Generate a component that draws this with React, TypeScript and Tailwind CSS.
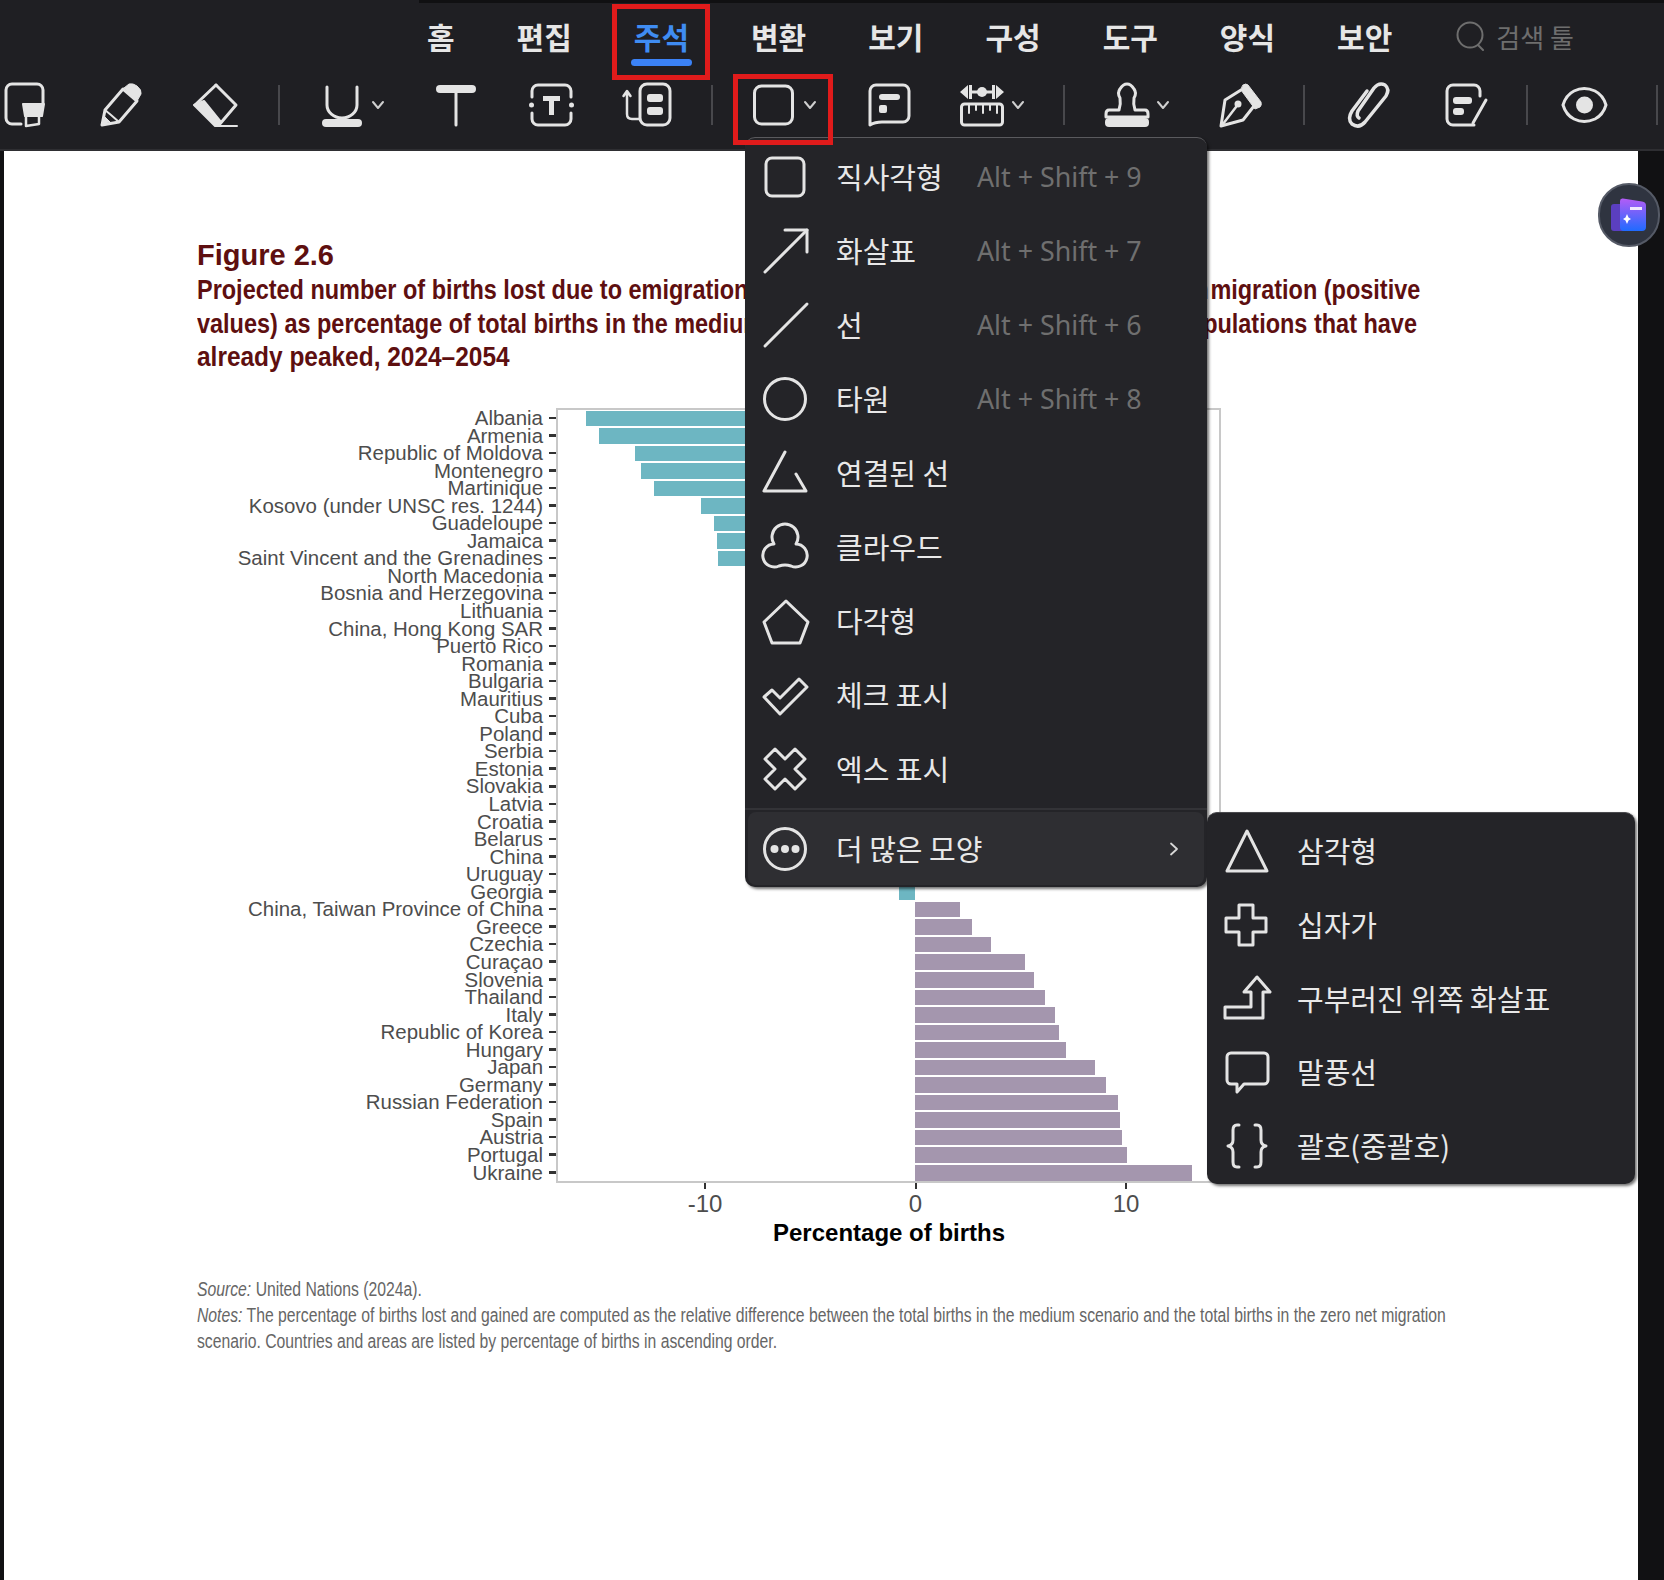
import type { ReactNode } from "react";

const PER_UNIT = 21.05;
const ZERO_OFFSET = 357.4;

const rows: [string, number][] = [
  ["Albania", -15.67], ["Armenia", -15.03], ["Republic of Moldova", -13.32], ["Montenegro", -13.03],
  ["Martinique", -12.41], ["Kosovo (under UNSC res. 1244)", -10.2], ["Guadeloupe", -9.57], ["Jamaica", -9.43],
  ["Saint Vincent and the Grenadines", -9.38], ["North Macedonia", -7.6], ["Bosnia and Herzegovina", -7.2],
  ["Lithuania", -6.9], ["China, Hong Kong SAR", -6.4], ["Puerto Rico", -6.1], ["Romania", -5.7], ["Bulgaria", -5.3],
  ["Mauritius", -4.9], ["Cuba", -4.5], ["Poland", -4.2], ["Serbia", -3.9], ["Estonia", -3.6], ["Slovakia", -3.2],
  ["Latvia", -2.9], ["Croatia", -2.5], ["Belarus", -2.2], ["China", -1.8], ["Uruguay", -1.3], ["Georgia", -0.78],
  ["China, Taiwan Province of China", 2.12], ["Greece", 2.67], ["Czechia", 3.57], ["Curaçao", 5.23], ["Slovenia", 5.63],
  ["Thailand", 6.15], ["Italy", 6.63], ["Republic of Korea", 6.8], ["Hungary", 7.15], ["Japan", 8.53], ["Germany", 9.05],
  ["Russian Federation", 9.62], ["Spain", 9.72], ["Austria", 9.8], ["Portugal", 10.05], ["Ukraine", 13.12],
];

const tabs = ["홈", "편집", "주석", "변환", "보기", "구성", "도구", "양식", "보안"];

function Icon({ w = 44, className = "", children }: { w?: number; className?: string; children: ReactNode }) {
  return (
    <svg
      viewBox={`0 0 ${w} 44`}
      width={w}
      height={44}
      fill="none"
      stroke="#e4e4e4"
      strokeWidth={3}
      strokeLinecap="round"
      strokeLinejoin="round"
      className={`shrink-0 overflow-visible ${className}`}
    >
      {children}
    </svg>
  );
}

function Chevron({ className = "" }: { className?: string }) {
  return (
    <svg viewBox="0 0 14 10" width={14} height={10} fill="none" stroke="#cfcfcf" strokeWidth={2} strokeLinecap="round" strokeLinejoin="round" className={`shrink-0 ${className}`}>
      <path d="M2 2l5 6 5-6" />
    </svg>
  );
}

function Divider({ className = "" }: { className?: string }) {
  return <div className={`h-[40px] w-[2px] shrink-0 bg-[#48484c] ${className}`} />;
}

function Toolbar() {
  return (
    <div className="flex h-[44px] items-center">
      {/* highlight */}
      <Icon w={41} className="ml-[4px]">
        <path d="M17 41H8a6 6 0 0 1-6-6V7a6 6 0 0 1 6-6h25a6 6 0 0 1 6 6v13" />
        <path d="M19 21h21l-2 12H21z" fill="#e4e4e4" strokeWidth={2} />
        <path d="M22 33v10l13-2v-8" strokeWidth={2.5} />
      </Icon>
      {/* pencil */}
      <Icon w={42} className="ml-[55px]">
        <path d="M2 42l3-15L23 6l14 12-18 21z" />
        <path d="M5 27l6 5 8 7" strokeWidth={2} />
        <path d="M24 5l5-4q4-1 8 2 5 4 4 8l-4 7z" fill="#e4e4e4" strokeWidth={1} />
        <path d="M2 42l3-8 5 5z" fill="#e4e4e4" strokeWidth={1} />
      </Icon>
      {/* eraser */}
      <Icon w={45} className="ml-[51px]">
        <path d="M23 2L43 22 26 42" />
        <path d="M23 2L2 22" />
        <path d="M1 22l10-4 17 21-2 4h18v0H22z" fill="#e4e4e4" strokeWidth={2} />
      </Icon>
      <Divider className="ml-[40px]" />
      {/* underline */}
      <Icon w={40} className="ml-[42px]">
        <path d="M5 4v18a15 13 0 0 0 30 0V4" />
        <rect x="0" y="36" width="40" height="8" rx="4" fill="#e4e4e4" stroke="none" />
      </Icon>
      <Chevron className="ml-[9px]" />
      {/* text */}
      <Icon w={40} className="ml-[51px]">
        <rect x="0" y="2" width="40" height="8" rx="4" fill="#e4e4e4" stroke="none" />
        <path d="M20 6v36" />
      </Icon>
      {/* text box */}
      <Icon w={45} className="ml-[53px]">
        <path d="M3 14V8a6 6 0 0 1 6-6h27a6 6 0 0 1 6 6v6M3 30v6a6 6 0 0 0 6 6h27a6 6 0 0 0 6-6v-6" />
        <circle cx="2.500" cy="22" r="2.500" fill="#e4e4e4" stroke="none" />
        <circle cx="42.500" cy="22" r="2.500" fill="#e4e4e4" stroke="none" />
        <path d="M14 13h17v5h-6v14h-5V18h-6z" fill="#e4e4e4" stroke="none" />
      </Icon>
      {/* text callout */}
      <Icon w={48} className="ml-[49px]">
        <rect x="17" y="1" width="30" height="41" rx="7" />
        <rect x="24" y="11" width="16" height="8" rx="3" fill="#e4e4e4" stroke="none" />
        <rect x="24" y="24" width="16" height="8" rx="3" fill="#e4e4e4" stroke="none" />
        <path d="M4 9v22q0 5 5 5h8M0.500 13L4 8l3.500 5" strokeWidth={2.5} />
      </Icon>
      <Divider className="ml-[40px]" />
      {/* shapes */}
      <Icon w={41} className="ml-[40px]">
        <rect x="1.500" y="3" width="38" height="38" rx="7" />
      </Icon>
      <Chevron className="ml-[9px]" />
      {/* comment */}
      <Icon w={43} className="ml-[51px]">
        <path d="M8 2h27a6 6 0 0 1 6 6v25a6 6 0 0 1-6 6H14q-7 0-12 3V8a6 6 0 0 1 6-6z" />
        <rect x="11" y="11" width="21" height="6" rx="3" fill="#e4e4e4" stroke="none" />
        <rect x="11" y="22" width="8" height="8" rx="2" fill="#e4e4e4" stroke="none" />
      </Icon>
      {/* measure */}
      <Icon w={44} className="ml-[49px]">
        <path d="M0 9l8-7v14zM44 9l-8-7v14z" fill="#e4e4e4" stroke="none" />
        <rect x="9" y="2" width="3" height="14" fill="#e4e4e4" stroke="none" />
        <rect x="32" y="2" width="3" height="14" fill="#e4e4e4" stroke="none" />
        <circle cx="22" cy="9" r="5" fill="#e4e4e4" stroke="none" />
        <path d="M12 9h20" />
        <rect x="1.500" y="21" width="41" height="21" rx="3" />
        <path d="M9 22v8M16 22v5M23 22v8M30 22v5M37 22v8" strokeWidth={2} />
      </Icon>
      <Chevron className="ml-[7px]" />
      <Divider className="ml-[38px]" />
      {/* stamp */}
      <Icon w={46} className="ml-[39px]">
        <path d="M15 27q2-6 1-12-3-5 0-9 3-5 7-5t7 5q3 4 0 9-1 6 1 12h10q3 0 3 4v3H2v-3q0-4 3-4z" />
        <rect x="1" y="35" width="44" height="9" rx="4" fill="#e4e4e4" stroke="none" />
      </Icon>
      <Chevron className="ml-[6px]" />
      {/* signature pen */}
      <Icon w={43} className="ml-[49px]">
        <path d="M22 7L6 17 2 43l22-6 11-14" />
        <path d="M24 2q3-2 5 0l13 17q1 3-1 5l-5 2L22 7z" fill="#e4e4e4" strokeWidth={1} />
        <path d="M4 41l13-17" strokeWidth={2.500} />
        <circle cx="19" cy="21" r="3.500" fill="#e4e4e4" stroke="none" />
      </Icon>
      <Divider className="ml-[41px]" />
      {/* attachment */}
      <Icon w={43} className="ml-[42px]">
        <path d="M20 8L5 28q-5 8 0 13 7 5 13-2L39 13q4-7-1-11-6-3-11 3L11 28q-2 5 1 7" strokeWidth={3.5} />
      </Icon>
      {/* note */}
      <Icon w={42} className="ml-[54px]">
        <path d="M30 42H9a6 6 0 0 1-6-6V8a6 6 0 0 1 6-6h21a6 6 0 0 1 6 6v5" />
        <rect x="9" y="14" width="19" height="7" rx="3" fill="#e4e4e4" stroke="none" />
        <rect x="9" y="25" width="11" height="7" rx="3" fill="#e4e4e4" stroke="none" />
        <path d="M42 17L29 40" />
      </Icon>
      <Divider className="ml-[40px]" />
      {/* eye */}
      <Icon w={47} className="ml-[33px]">
        <path d="M2 22Q5 12 13 8q10-5 21 0 8 4 11 14-3 10-11 14-11 5-21 0Q5 32 2 22z" />
        <circle cx="23.500" cy="22" r="8.500" fill="#e4e4e4" stroke="none" />
      </Icon>
      <Divider className="ml-[48px]" />
    </div>
  );
}

const shapeIcons: Record<string, ReactNode> = {
  rect: <rect x="3" y="3" width="38" height="38" rx="6" />,
  arrow: (
    <>
      <path d="M2 43L44 1" />
      <path d="M22 1h22v22" />
    </>
  ),
  line: <path d="M2 43L44 1" />,
  ellipse: <circle cx="22" cy="22" r="20.500" />,
  connected: <path d="M22 1L1 40h42L33 23" />,
  cloud: <path d="M11 19a13 13 0 1 1 22 0 11.500 11.500 0 1 1-5 22q-6-2-12 0a11.500 11.500 0 1 1-5-22z" />,
  polygon: <path d="M23 2l22 21-8 21H9L1 23z" />,
  check: <path d="M1 24l8-7 8 8L36 6l8 8-27 27z" />,
  x: <path d="M12 2l10 10L32 2l10 10-10 10 10 10-10 10-10-10-10 10L2 32l10-10L2 12z" />,
  more: (
    <>
      <circle cx="22" cy="22" r="20.500" />
      <circle cx="11.500" cy="22" r="4" fill="#e4e4e4" stroke="none" />
      <circle cx="22" cy="22" r="4" fill="#e4e4e4" stroke="none" />
      <circle cx="32.500" cy="22" r="4" fill="#e4e4e4" stroke="none" />
    </>
  ),
  triangle: <path d="M23 2l20 40H3z" />,
  plus: <path d="M15 2h14v13h13v14H29v13H15V29H2V15h13z" />,
  bent: <path d="M33 1l13 15h-7v26H1V31h26V16h-7z" />,
  bubble: <path d="M7 3h33a4 4 0 0 1 4 4v23a4 4 0 0 1-4 4H20l-7 8v-8H7a4 4 0 0 1-4-4V7a4 4 0 0 1 4-4z" />,
  braces: (
    <>
      <path d="M15 1h-2q-4 0-4 5v10q0 5-5 6 5 1 5 6v10q0 5 4 5h2" />
      <path d="M31 1h2q4 0 4 5v10q0 5 5 6-5 1-5 6v10q0 5-4 5h-2" />
    </>
  ),
};

const menuItems: [string, string, string?][] = [
  ["rect", "직사각형", "Alt + Shift + 9"],
  ["arrow", "화살표", "Alt + Shift + 7"],
  ["line", "선", "Alt + Shift + 6"],
  ["ellipse", "타원", "Alt + Shift + 8"],
  ["connected", "연결된 선"],
  ["cloud", "클라우드"],
  ["polygon", "다각형"],
  ["check", "체크 표시"],
  ["x", "엑스 표시"],
];

const subItems: [string, string][] = [
  ["triangle", "삼각형"],
  ["plus", "십자가"],
  ["bent", "구부러진 위쪽 화살표"],
  ["bubble", "말풍선"],
  ["braces", "괄호(중괄호)"],
];

function ShapesMenu() {
  return (
    <div className="absolute left-[745px] top-[137px] h-[750px] w-[462px] rounded-[10px] border-t border-[#5a5a5e] bg-[#242428] pt-[2px] shadow-[2px_2px_3px_rgba(0,0,0,0.55)]">
      {menuItems.map(([icon, label, keys]) => (
        <div key={label} className="flex h-[74px] items-center pl-[18px]">
          <Icon>{shapeIcons[icon]}</Icon>
          <span className="ml-[29px] w-[141px] whitespace-nowrap text-[29px] text-[#e8e8e8]">{label}</span>
          {keys && <span className="whitespace-nowrap font-['Noto_Sans'] text-[26.8px] text-[#6f6f6f]">{keys}</span>}
        </div>
      ))}
      <div className="mt-[2px] h-[2px] bg-[#333337]" />
      <div className="mx-[3px] mt-[2px] flex h-[73px] items-center rounded-[8px] bg-[#2e2e32] pl-[15px]">
        <Icon>{shapeIcons.more}</Icon>
        <span className="ml-[29px] text-[29px] text-[#e8e8e8]">더 많은 모양</span>
        <svg viewBox="0 0 10 14" width={10} height={14} fill="none" stroke="#d8d8d8" strokeWidth={1.800} strokeLinecap="round" strokeLinejoin="round" className="ml-auto mr-[25px]">
          <path d="M2 1.500l6 5.500-6 5.500" />
        </svg>
      </div>
    </div>
  );
}

function SubMenu() {
  return (
    <div className="absolute left-[1207px] top-[812px] h-[372px] w-[428px] rounded-[10px] border-t border-[#4a4a4e] bg-[#242428] pt-[1px] shadow-[2px_2px_3px_rgba(0,0,0,0.55)]">
      {subItems.map(([icon, label]) => (
        <div key={label} className="flex h-[73.75px] items-center pl-[17px]">
          <Icon w={46}>{shapeIcons[icon]}</Icon>
          <span className="ml-[27px] whitespace-nowrap text-[29px] text-[#e8e8e8]">{label}</span>
        </div>
      ))}
    </div>
  );
}

function Chart() {
  return (
    <div className="mt-[34px]">
      <div className="flex">
        {/* y axis labels */}
        <div className="w-[359px] pt-[1.5px]">
          {rows.map(([name]) => (
            <div key={name} className="flex h-[17.55px] items-center justify-end">
              <span className="whitespace-nowrap text-[20.45px] leading-[17.55px] text-[#4d4d4d]">{name}</span>
              <div className="ml-[6px] h-[2.500px] w-[7px] bg-[#333333]" />
            </div>
          ))}
        </div>
        {/* plot */}
        <div className="h-[775px] w-[665px] border-2 border-[#c8c8c8]">
          {rows.map(([name, value]) => (
            <div key={name} className="flex h-[17.55px] items-center">
              <div
                className={`h-[15.5px] ${value < 0 ? "bg-[#6db6c2]" : "bg-[#a496ae]"}`}
                style={{
                  marginLeft: value < 0 ? ZERO_OFFSET + value * PER_UNIT : ZERO_OFFSET,
                  width: Math.abs(value) * PER_UNIT,
                }}
              />
            </div>
          ))}
        </div>
      </div>
      {/* x axis */}
      <div className="ml-[478px] flex gap-[150.5px]">
        {["-10", "0", "10"].map((t) => (
          <div key={t} className="flex w-[60px] flex-col items-center">
            <div className="h-[6px] w-[2px] bg-[#333333]" />
            <span className="mt-[1px] text-[24px] leading-[28px] text-[#4d4d4d]">{t}</span>
          </div>
        ))}
      </div>
      <div className="ml-[576px] text-[24px] font-bold leading-[30px] text-black">Percentage of births</div>
    </div>
  );
}

export default function App() {
  return (
    <div className="relative flex h-[1580px] w-[1664px] flex-col overflow-hidden bg-[#111113] font-['Liberation_Sans','Noto_Sans_CJK_KR',sans-serif]">
      <div className="relative flex h-[151px] shrink-0 flex-col border-b-2 border-[#2e2e32] bg-[#1f1f23] font-['Noto_Sans_CJK_KR',sans-serif]">
        <div className="ml-[419px] h-[3px] bg-[#101012]" />
        {/* tabs */}
        <div className="flex h-[66px] items-center pl-[427px]">
          <div className="flex gap-[62px]">
            {tabs.map((t) => (
              <span key={t} className={`text-[30px] font-semibold leading-[36px] ${t === "주석" ? "text-[#3f8cf2]" : "text-[#e6e6e6]"}`}>
                {t}
              </span>
            ))}
          </div>
          <svg viewBox="0 0 28 30" width={28} height={30} fill="none" stroke="#6e6e6e" strokeWidth={2} strokeLinecap="round" className="ml-[64px]">
            <circle cx="14" cy="14" r="12.500" />
            <path d="M22 24l5 5" />
          </svg>
          <span className="ml-[12px] text-[26px] text-[#6e6e6e]">검색 툴</span>
        </div>
        <div className="pt-[14px]">
          <Toolbar />
        </div>
        <div className="absolute left-[631px] top-[59px] h-[7px] w-[61px] rounded-full bg-[#3b82f6]" />
      </div>

      {/* page */}
      <div className="ml-[4px] w-[1634px] flex-1 bg-white pl-[193px] pt-[87px]">
        <div className="text-[29px] font-bold leading-[34px] text-[#5e0f10]">Figure 2.6</div>
        <div className="mt-[1px] text-[28px] font-bold leading-[33.5px] text-[#5e0f10]">
          <div className="origin-left scale-x-[0.838] whitespace-nowrap">
            Projected number of births lost due to emigration<span className="tracking-[2px]"> (negative values) or gained from im</span>migration (positive
          </div>
          <div className="origin-left scale-x-[0.838] whitespace-nowrap">
            values) as percentage of total births in the mediu<span className="tracking-[-0.7px]">m scenario, for countries and areas with po</span>pulations that have
          </div>
          <div className="origin-left scale-x-[0.873] whitespace-nowrap">already peaked, 2024–2054</div>
        </div>
        <Chart />
        <div className="mt-[28px] origin-left scale-x-[0.787] text-[20px] leading-[26px] text-[#666666]">
          <div className="whitespace-nowrap"><i>Source:</i> United Nations (2024a).</div>
          <div className="whitespace-nowrap">
            <i>Notes:</i> The percentage of births lost and gained are computed as the relative difference between the total births in the medium scenario and the total births in the zero net migration
          </div>
          <div className="whitespace-nowrap">scenario. Countries and areas are listed by percentage of births in ascending order.</div>
        </div>
      </div>

      {/* overlays */}
      <div className="font-['Noto_Sans_CJK_KR',sans-serif]">
        <ShapesMenu />
        <SubMenu />
      </div>
      <div className="absolute left-[612px] top-[4px] h-[76px] w-[98px] border-[5px] border-[#e01b1b]" />
      <div className="absolute left-[733px] top-[74px] h-[71px] w-[100px] border-[5px] border-[#e01b1b]" />
      <div className="absolute left-[1598px] top-[183px] flex h-[64px] w-[62px] items-center justify-center rounded-full border-2 border-[#555a66] bg-[#2f3440]">
        <svg viewBox="0 0 36 36" width={36} height={36}>
          <defs>
            <linearGradient id="ai" x1="0" y1="0" x2="0" y2="1">
              <stop offset="0" stopColor="#b45cf6" />
              <stop offset="1" stopColor="#1f6bff" />
            </linearGradient>
          </defs>
          <rect x="0" y="7" width="20" height="27" rx="3" fill="#5b3fc0" />
          <path d="M9 4q0-3 3-2.500l19 3q4 .6 4 4V30q0 4-4 4H13q-4 0-4-4z" fill="url(#ai)" />
          <rect x="19" y="10" width="12" height="3" fill="#f0e8ff" />
          <path d="M16 17l1.500 3.500L20 22l-2.500 1.500L16 27l-1.500-3.500L12 22l2.500-1.500z" fill="#fff" />
        </svg>
      </div>
    </div>
  );
}
